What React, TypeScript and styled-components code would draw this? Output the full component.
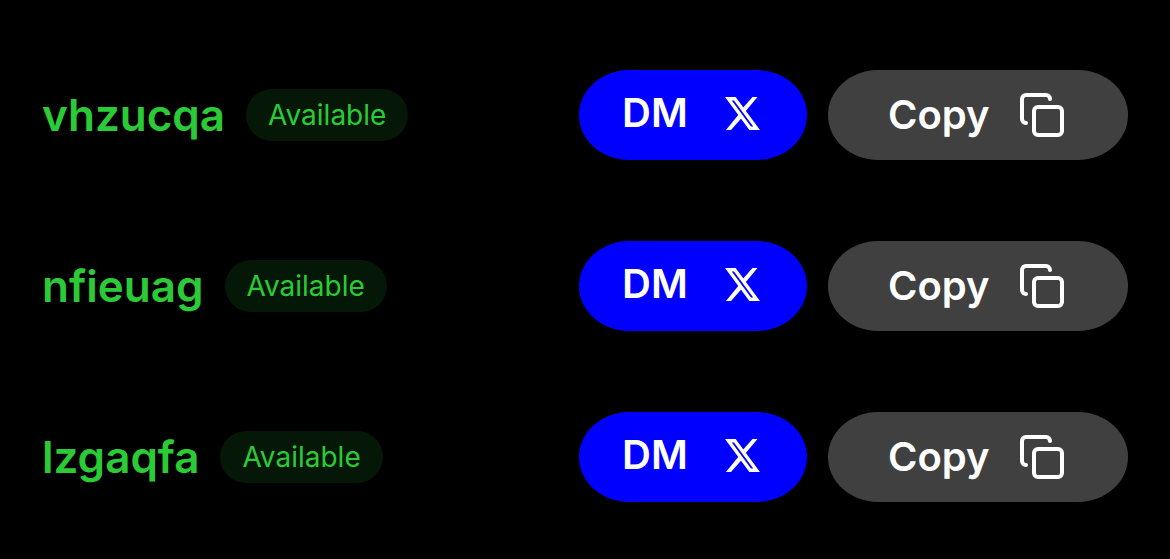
import React from 'react'
import styled, { createGlobalStyle } from 'styled-components'

interface Handle {
	name: string
	status: string
}

const handles: Handle[] = [
	{ name: 'vhzucqa', status: 'Available' },
	{ name: 'nfieuag', status: 'Available' },
	{ name: 'lzgaqfa', status: 'Available' },
]

function XLogo() {
	return (
		<svg width="35" height="33" viewBox="0 0 35 33" fill="none" aria-hidden="true">
			<path d="M3.4 1.7H9.8L31.6 31.3H25.2Z" stroke="currentColor" strokeWidth="3.4" />
			<path d="M27.5 0H32.5L20.6 14.2L18 10.8ZM13.6 17.6L16.4 21.2L6 33H1Z" fill="currentColor" />
		</svg>
	)
}

function CopyIcon() {
	return (
		<svg width="44" height="44" viewBox="0 0 44 44" fill="none" aria-hidden="true">
			<rect x="14" y="14" width="28" height="28" rx="4" stroke="currentColor" strokeWidth="4" />
			<path
				d="M6 30a4 4 0 0 1-4-4V6a4 4 0 0 1 4-4h20a4 4 0 0 1 4 4"
				stroke="currentColor"
				strokeWidth="4"
				strokeLinecap="round"
			/>
		</svg>
	)
}

function HandleRow({ name, status }: Handle) {
	return (
		<StyledRow>
			<StyledName>{name}</StyledName>
			<StyledBadge>{status}</StyledBadge>
			<StyledActions>
				<StyledButton $variant="dm">
					<StyledLabel>DM</StyledLabel>
					<XLogo />
				</StyledButton>
				<StyledButton $variant="copy">
					<StyledLabel>Copy</StyledLabel>
					<CopyIcon />
				</StyledButton>
			</StyledActions>
		</StyledRow>
	)
}

export default function App() {
	return (
		<>
			<GlobalStyle />
			<StyledList>
				{handles.map((handle) => (
					<HandleRow key={handle.name} {...handle} />
				))}
			</StyledList>
		</>
	)
}

const GlobalStyle = createGlobalStyle`
	* {
		box-sizing: border-box;
	}
	body {
		margin: 0;
		background-color: #000;
		font-family: Inter, 'Liberation Sans', sans-serif;
	}
`

const StyledList = styled.ul`
	display: grid;
	gap: 81px;
	list-style-type: none;
	margin: 0;
	padding: 70px 42px 57px;
`

const StyledRow = styled.li`
	display: flex;
	align-items: center;
`

const StyledName = styled.span`
	color: #2bcb37;
	font-size: 44px;
	font-weight: 600;
	line-height: 56px;
`

const StyledBadge = styled.span`
	color: #2bcb37;
	background-color: #051706;
	border-radius: 26px;
	font-size: 28px;
	line-height: 52px;
	padding: 0 22px;
	margin-left: 21px;
`

const StyledActions = styled.div`
	display: flex;
	gap: 21px;
	margin-left: auto;
`

const StyledButton = styled.button<{ $variant: 'dm' | 'copy' }>`
	display: flex;
	align-items: center;
	justify-content: space-between;
	width: ${({ $variant }) => ($variant === 'dm' ? 228 : 300)}px;
	height: 90px;
	padding: ${({ $variant }) => ($variant === 'dm' ? '0 47px 4px 43px' : '0 64px 0 60px')};
	border: 0;
	border-radius: 50px / 45px;
	background-color: ${({ $variant }) => ($variant === 'dm' ? '#00f' : '#404040')};
	color: #fff;
	font-family: inherit;
	font-size: 40px;
	font-weight: 600;
	cursor: pointer;
`

const StyledLabel = styled.span`
	padding-bottom: 2px;
`
